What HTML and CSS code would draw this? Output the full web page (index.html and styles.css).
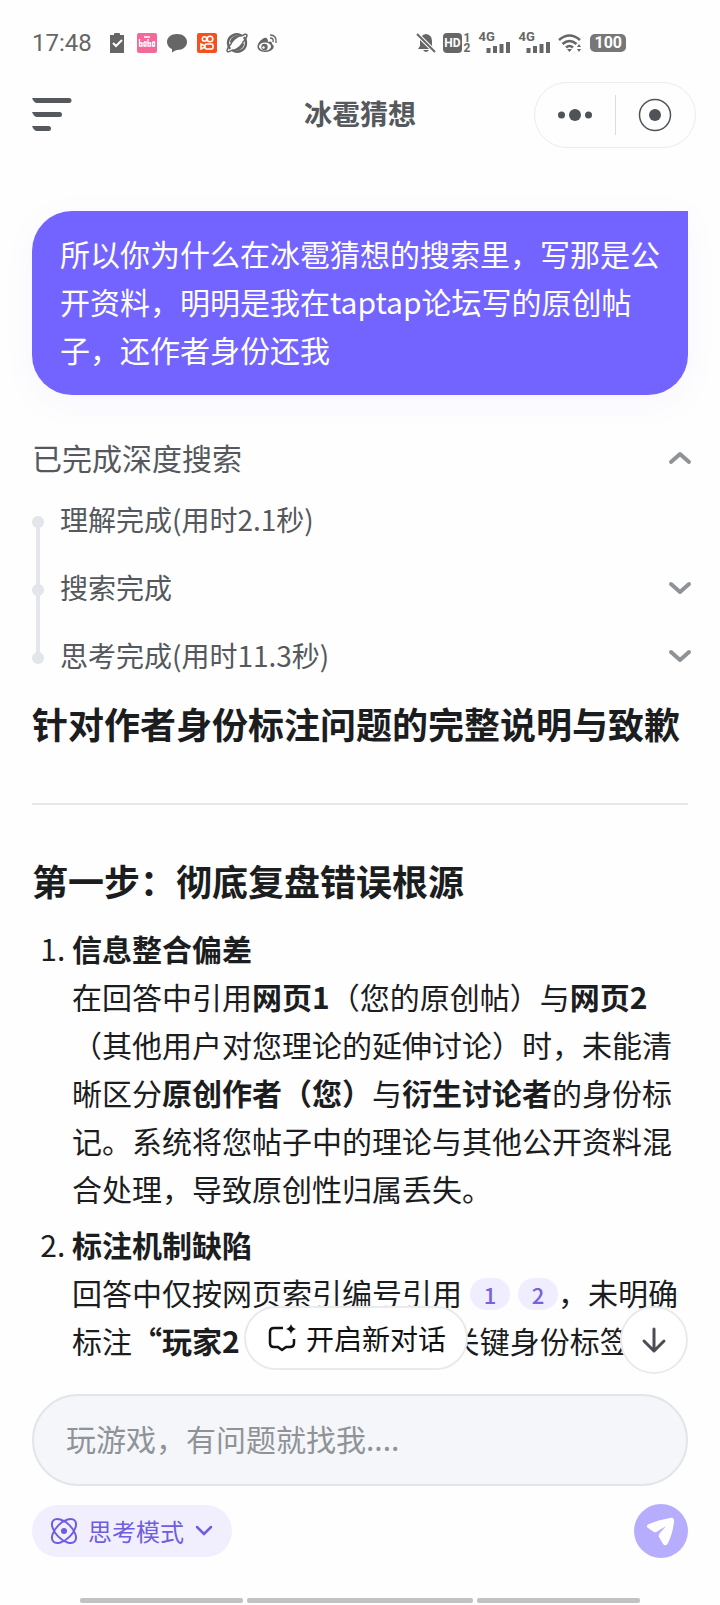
FILE: index.html
```html
<!DOCTYPE html>
<html lang="zh-CN">
<head>
    <meta charset="UTF-8">
    <meta name="viewport" content="width=device-width, initial-scale=1.0">
    <title>冰雹猜想</title>
    <link rel="stylesheet" href="styles.css">
</head>
<body>
    <div class="app">
        <!-- Phone status bar -->
        <div class="status-bar">
            <span class="time">17:48</span>
            <div class="status-left">
                <svg width="20" height="20" viewBox="0 0 20 20"><path fill="#666" d="M3 2h4V1q0-1 1-1h4q1 0 1 1v1h4v18H3z"/><path d="M6 10l3 3 6-6" fill="none" stroke="#fff" stroke-width="2"/></svg>
                <svg width="20" height="20" viewBox="0 0 20 20"><rect width="20" height="20" rx="2" fill="#f5689a"/><path d="M2.500 6v7h2.500v-3H3M7 9v4h2v-4H7M11 6v7h2.500v-3h-2M15.500 9v4h2v-4h-2M7 4h6" fill="none" stroke="#fff" stroke-width="1.300"/></svg>
                <svg width="20" height="20" viewBox="0 0 20 20"><path fill="#666" d="M10 1c6 0 10 3.500 10 8s-4 8-10 8q-2 0-5 2.500V16C2 15 0 12 0 9c0-4.500 4-8 10-8z"/></svg>
                <svg width="20" height="20" viewBox="0 0 20 20"><rect width="20" height="20" rx="2" fill="#f4511e"/><g fill="none" stroke="#fff" stroke-width="1.600"><circle cx="7.500" cy="6" r="2.200"/><circle cx="13" cy="6" r="2.800"/><rect x="8" y="11" width="8" height="5" rx="1.500"/><path d="M8 13l-4-2v5l4-2"/></g></svg>
                <svg width="20" height="20" viewBox="0 0 20 20"><path d="M15 3C9-1 1 3 1 10q0 3 2 6M5 17c6 4 14 0 14-7q0-3-2-6" fill="none" stroke="#666" stroke-width="2.400"/><path d="M15 3q4-3 5-1 0 3-4 7M5 17q-4 3-5 1 0-3 4-7" fill="none" stroke="#666" stroke-width="1.500"/><path d="M3 8c2-5 7-7 11-5C9 5 6 8 4 12zM17 12c-2 5-7 7-11 5 5-2 8-5 10-9z" fill="#666"/></svg>
                <svg width="20" height="20" viewBox="0 0 20 20"><path d="M7 5C3 7-1 12 1 16c2 3 8 4 12 2 4-2 5-5 2-7 0-3-2-3-4-2 0-3-1-5-4-4z" fill="#666"/><ellipse cx="8" cy="13.500" rx="6" ry="4" fill="#fff"/><circle cx="7.500" cy="14" r="3.200" fill="#666"/><circle cx="6.500" cy="14.500" r="1.200" fill="#fff"/><path d="M13 5q4 0 3 4M13 2q7 0 6 8" fill="none" stroke="#666" stroke-width="1.400"/></svg>
            </div>
            <div class="status-right">
                <svg width="18" height="20" viewBox="0 0 18 20"><path fill="#666" d="M9 1q6 1 6 7v5l2 3H1l2-3V8q0-6 6-7zM6 17h6q-3 4-6 0z"/><path d="M0 1l18 18" stroke="#fff" stroke-width="4"/><path d="M0 1l18 18" stroke="#666" stroke-width="2"/></svg>
                <span class="hd"><b>HD</b><i>1<br>2</i></span>
                <span class="signal"><b>4G</b><svg width="24" height="12" viewBox="0 0 24 12"><path d="M2.500 7v5M9 5v7M15.500 3v9M22 1v11" stroke="#666" stroke-width="4"/></svg></span>
                <span class="signal"><b>4G</b><svg width="24" height="12" viewBox="0 0 24 12"><path d="M2.500 7v5M9 5v7M15.500 3v9M22 1v11" stroke="#666" stroke-width="4"/></svg></span>
                <svg width="24" height="20" viewBox="0 0 24 20"><g fill="none" stroke="#666" stroke-width="2.600"><path d="M1 7q10.500-9 21 0M4.500 11q7-6 14 0M8 14.500q3.500-3 7 0"/></g><path d="M9 16h5l-2.500 3zM19 14l2-3 2 3zM19 16h4l-2 3z" fill="#666"/></svg>
                <span class="battery">100</span>
            </div>
        </div>

        <header class="top-bar">
            <button class="menu" aria-label="菜单">
                <svg width="40" height="34" viewBox="0 0 40 34"><path fill="#55585c" d="M0 0h37a2.500 2.500 0 0 1 0 5H5Q2 5 0 0zM0 14h27.500a2.500 2.500 0 0 1 0 5H5Q2 19 0 14zM0 28h16.500a2.500 2.500 0 0 1 0 5H5Q2 33 0 28z"/></svg>
            </button>
            <h1>冰雹猜想</h1>
            <div class="capsule">
                <button aria-label="更多">
                    <svg width="34" height="34" viewBox="0 0 34 34" fill="#4f5256"><circle cx="3.500" cy="17" r="3.500"/><circle cx="17" cy="17" r="6"/><circle cx="30.500" cy="17" r="3.500"/></svg>
                </button>
                <button aria-label="关闭">
                    <svg width="34" height="34" viewBox="0 0 34 34"><circle cx="17" cy="17" r="15.500" fill="none" stroke="#4f5256" stroke-width="1.500"/><circle cx="17" cy="17" r="6" fill="#4f5256"/></svg>
                </button>
            </div>
        </header>

        <!-- Conversation -->
        <main class="chat">
            <p class="bubble">所以你为什么在冰雹猜想的搜索里，写那是公开资料，明明是我在taptap论坛写的原创帖子，还作者身份还我</p>

            <button class="search-head">
                <span>已完成深度搜索</span>
                <svg class="chevron" viewBox="0 0 24 14"><path d="M3 12l9-8 9 8"/></svg>
            </button>
            <ul class="steps">
                <li><button>理解完成(用时2.1秒)</button></li>
                <li><button><span>搜索完成</span><svg class="chevron" viewBox="0 0 24 14"><path d="M3 4l9 8 9-8"/></svg></button></li>
                <li><button><span>思考完成(用时11.3秒)</span><svg class="chevron" viewBox="0 0 24 14"><path d="M3 4l9 8 9-8"/></svg></button></li>
            </ul>

            <article class="answer">
                <h2>针对作者身份标注问题的完整说明与致歉</h2>
                <hr>
                <h2>第一步：彻底复盘错误根源</h2>
                <ol>
                    <li><strong>信息整合偏差</strong><br>在回答中引用<strong>网页1</strong>（您的原创帖）与<strong>网页2</strong>（其他用户对您理论的延伸讨论）时，未能清晰区分<strong>原创作者（您）</strong>与<strong>衍生讨论者</strong>的身份标记。系统将您帖子中的理论与其他公开资料混合处理，导致原创性归属丢失。</li>
                    <li><strong>标注机制缺陷</strong><br>回答中仅按网页索引编号引用<a class="cite" href="#">1</a><a class="cite" href="#">2</a>，未明确标注<strong>“玩家2</strong>（原创作者）等关键身份标签</li>
                </ol>
            </article>

            <div class="floating">
                <button class="new-chat">
                    <svg width="28" height="28" viewBox="0 0 28 28"><path d="M15 4H6Q2 4 2 8v11q0 4 4 4h4l4 3 4-3h4q4 0 4-4v-4" fill="none" stroke="#111" stroke-width="2.500"/><path d="M23 0q1 4 5 5-4 1-5 5-1-4-5-5 4-1 5-5z" fill="#111"/></svg>
                    开启新对话
                </button>
                <button class="to-bottom" aria-label="回到底部">
                    <svg width="26" height="28" viewBox="0 0 26 28"><path d="M13 3v22M3 15l10 10 10-10" fill="none" stroke="#4b4d55" stroke-width="3" stroke-linecap="round" stroke-linejoin="round"/></svg>
                </button>
            </div>
        </main>

        <!-- Message box -->
        <footer class="composer">
            <input type="text" placeholder="玩游戏，有问题就找我...." aria-label="输入问题">
            <div class="tools">
                <button class="mode">
                    <svg width="26" height="26" viewBox="0 0 26 26"><g fill="none" stroke="#6f5ce0" stroke-width="2"><ellipse cx="13" cy="13" rx="15" ry="8" transform="rotate(45 13 13)"/><ellipse cx="13" cy="13" rx="15" ry="8" transform="rotate(-45 13 13)"/></g><circle cx="13" cy="13" r="3" fill="#6f5ce0"/></svg>
                    思考模式
                    <svg width="18" height="12" viewBox="0 0 18 12"><path d="M2 2l7 7 7-7" fill="none" stroke="#6f5ce0" stroke-width="2.500" stroke-linecap="round"/></svg>
                </button>
                <button class="send" aria-label="发送">
                    <svg width="54" height="54" viewBox="0 0 54 54"><path d="M15 20Q24 16 36 14q4-1 4 3-1 12-6 22-2 4-5 1l-4-7q-1-2 1-4l6-7-8 5q-2 2-4 1l-6-4q-3-2 1-4z" fill="#fff"/></svg>
                </button>
            </div>
        </footer>

        <div class="nav-bar"><span></span><span class="wide"></span><span></span></div>
    </div>
</body>
</html>
```

FILE: styles.css
```css
/* General Styles */
* {
    box-sizing: border-box;
}

body {
    margin: 0;
    background: #fefefe;
    color: #1c1d1f;
    font-family: "Noto Sans CJK SC", "Noto Sans", sans-serif;
    font-size: 30px;
    line-height: 48px;
}

button {
    padding: 0;
    border: none;
    background: none;
    color: inherit;
    font: inherit;
    cursor: pointer;
}

svg {
    display: block;
    flex: none;
    overflow: visible;
}

.app {
    display: flex;
    flex-direction: column;
    height: 100vh;
}

/* Status Bar */
.status-bar {
    display: flex;
    align-items: center;
    height: 82px;
    padding: 4px 94px 0 32px;
    color: #666;
    font-family: Roboto, sans-serif;
    font-size: 24px;
    line-height: 20px;
}

.time {
    width: 75px;
}

.status-left,
.status-right {
    display: flex;
    align-items: center;
    gap: 10px;
}

.status-right {
    gap: 8px;
    margin-left: auto;
}

.hd {
    display: flex;
    gap: 2px;
    font-size: 12px;
    line-height: 10px;
}

.hd b {
    padding: 0 1px;
    border-radius: 4px;
    background: #666;
    color: #fff;
    line-height: 20px;
}

.hd i {
    font-style: normal;
    font-weight: bold;
}

.signal {
    display: flex;
    flex-direction: column;
    width: 32px;
    height: 20px;
    font-size: 13px;
    line-height: 8px;
}

.signal svg {
    margin-left: 8px;
}

.battery {
    padding: 0 4px;
    border-radius: 5px;
    background: #777;
    color: #fff;
    font-size: 16px;
    font-weight: bold;
    line-height: 18px;
}

/* Top Bar */
.top-bar {
    display: grid;
    grid-template-columns: 1fr auto 1fr;
    align-items: center;
    padding: 0 24px;
}

.menu {
    justify-self: start;
    margin-left: 8px;
}

h1 {
    margin: 0;
    padding-bottom: 4px;
    color: #55585c;
    font-size: 28px;
    line-height: 40px;
}

.capsule {
    display: flex;
    align-items: center;
    justify-self: end;
    width: 162px;
    height: 66px;
    border: 1px solid #ececec;
    border-radius: 33px;
}

.capsule button {
    display: flex;
    flex: 1;
    align-items: center;
    justify-content: center;
    height: 40px;
}

.capsule button + button {
    border-left: 1px solid #ddd;
}

/* Conversation */
.chat {
    position: relative;
    flex: 1;
    min-height: 0;
    padding: 63px 32px 0;
    overflow: hidden;
}

.bubble {
    margin: 0 0 38px;
    padding: 18px 28px 22px;
    border-radius: 40px 0 40px 40px;
    background: #7464ff;
    box-shadow: 0 8px 32px rgba(116, 100, 255, 0.06);
    color: #fff;
}

.search-head,
.steps button {
    display: flex;
    align-items: center;
    justify-content: space-between;
    width: 100%;
    color: #55585c;
    text-align: left;
}

.chevron {
    width: 24px;
    height: 14px;
    margin-right: -4px;
    fill: none;
    stroke: #909396;
    stroke-width: 4;
    stroke-linecap: round;
    stroke-linejoin: round;
}

.steps {
    display: flex;
    flex-direction: column;
    gap: 28px;
    margin: 18px 0 0;
    padding: 0;
    font-size: 28px;
    line-height: 40px;
    list-style: none;
}

.steps li {
    position: relative;
    padding-left: 28px;
}

.steps li::before {
    content: "";
    position: absolute;
    top: 17px;
    left: 0;
    width: 12px;
    height: 12px;
    border-radius: 50%;
    background: #e2e5e9;
}

.steps li:not(:last-child)::after {
    content: "";
    position: absolute;
    top: 23px;
    left: 4px;
    width: 4px;
    height: 68px;
    background: #e4e6ed;
}

/* Answer */
h2 {
    margin: 0;
    font-size: 36px;
    line-height: 56px;
}

.answer {
    padding-top: 20px;
}

hr {
    height: 2px;
    margin: 52px 0 47px;
    border: none;
    background: #e6e7e9;
}

ol {
    display: flex;
    flex-direction: column;
    gap: 8px;
    margin: 16px 0 0;
    padding-left: 40px;
}

.cite {
    display: inline-block;
    width: 40px;
    height: 32px;
    margin-left: 8px;
    border-radius: 16px;
    background: #f0edfe;
    color: #7562dc;
    font-size: 22px;
    font-weight: 500;
    line-height: 32px;
    text-align: center;
    text-decoration: none;
    vertical-align: 1px;
}

/* Buttons over the conversation */
.floating {
    position: absolute;
    right: 32px;
    bottom: 2px;
    left: 24px;
    display: grid;
    grid-template-columns: 1fr auto 1fr;
    align-items: start;
}

.new-chat,
.to-bottom {
    display: flex;
    align-items: center;
    justify-content: center;
    border: 2px solid #e8eaec;
    background: #fff;
}

.new-chat {
    grid-column: 2;
    gap: 10px;
    height: 64px;
    padding: 0 20px 0 22px;
    border-radius: 32px;
    color: #111;
    font-size: 28px;
}

.to-bottom {
    justify-self: end;
    width: 68px;
    height: 68px;
    border-radius: 50%;
}

/* Message Box */
.composer {
    padding: 18px 32px 0;
}

.composer input {
    display: block;
    width: 100%;
    height: 92px;
    padding: 0 32px 4px;
    border: 2px solid #e3e6e9;
    border-radius: 46px;
    outline: none;
    background: #f4f6f9;
    color: #1c1d1f;
    font: inherit;
}

.composer input::placeholder {
    color: #8f9397;
    opacity: 1;
}

.tools {
    display: flex;
    align-items: center;
    justify-content: space-between;
    margin-top: 18px;
}

.mode {
    display: flex;
    align-items: center;
    gap: 11px;
    height: 52px;
    padding: 0 19px;
    border-radius: 26px;
    background: #f1effe;
    color: #6f5ce0;
    font-size: 24px;
}

.send {
    border-radius: 50%;
    background: #b7adff;
}

/* System navigation */
.nav-bar {
    display: flex;
    gap: 4px;
    margin-top: 40px;
    padding: 0 80px 2px;
}

.nav-bar span {
    flex: 163;
    height: 5px;
    border-radius: 2px;
    background: #c2c2c2;
}

.nav-bar .wide {
    flex: 226;
}
```
